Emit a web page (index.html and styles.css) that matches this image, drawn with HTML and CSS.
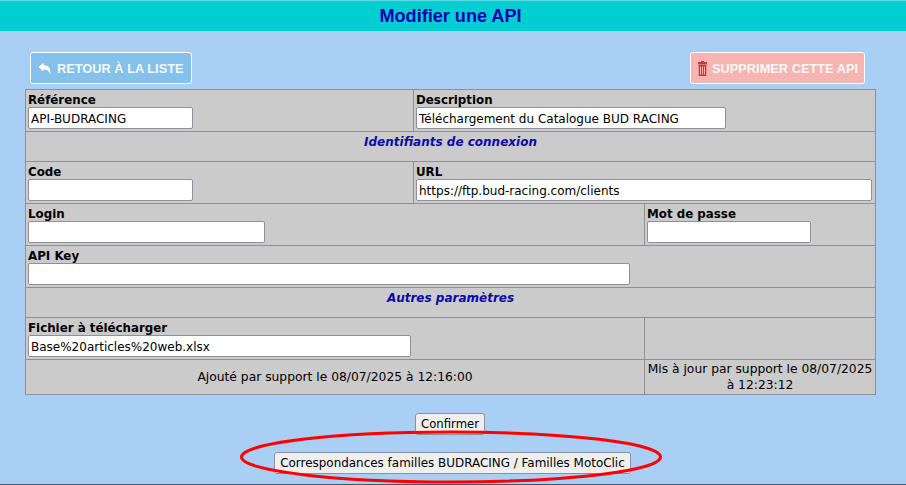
FILE: index.html
```html
<!DOCTYPE html>
<html lang="fr">
<head>
<meta charset="utf-8">
<title>Modifier une API</title>
<link rel="stylesheet" href="styles.css">
</head>
<body>
<header class="title-bar"><h1>Modifier une API</h1></header>
<main class="content">
  <div class="actions">
    <a class="btn btn-back"><svg class="ico" viewBox="0 0 13 13" width="13" height="13"><path fill="#fff" d="M0.5 5 L5.5 0.8 V3.2 C10 3.2 13 5.5 12.2 12.5 C11.2 9.2 9.5 7.6 5.5 7.6 V9.6 Z"/></svg>RETOUR À LA LISTE</a>
    <a class="btn btn-del"><svg class="ico" viewBox="0 0 9 15" width="9" height="15"><path fill="#d2323a" fill-rule="evenodd" d="M3 0h3v1h3v2.4H0V1h3zM.7 4h7.6v11H.7zM2 5.5v8h1v-8zM4 5.5v8h1v-8zM6 5.5v8h1v-8z"/></svg>SUPPRIMER CETTE API</a>
  </div>
  <table class="form">
    <colgroup><col class="c1"><col class="c2"><col class="c3"></colgroup>
    <tr class="r42">
      <td><label>Référence</label><input class="w165" value="API-BUDRACING"></td>
      <td colspan="2"><label>Description</label><input class="w310" value="Téléchargement du Catalogue BUD RACING"></td>
    </tr>
    <tr class="r30"><td colspan="3" class="section">Identifiants de connexion</td></tr>
    <tr class="r42">
      <td><label>Code</label><input class="w165"></td>
      <td colspan="2"><label>URL</label><input class="w456" value="https://ftp.bud-racing.com/clients"></td>
    </tr>
    <tr class="r42">
      <td colspan="2"><label>Login</label><input class="w237"></td>
      <td><label>Mot de passe</label><input class="w164"></td>
    </tr>
    <tr class="r42"><td colspan="3"><label>API Key</label><input class="w602"></td></tr>
    <tr class="r30"><td colspan="3" class="section">Autres paramètres</td></tr>
    <tr class="r42">
      <td colspan="2"><label>Fichier à télécharger</label><input class="w383" value="Base%20articles%20web.xlsx"></td>
      <td></td>
    </tr>
    <tr class="r35">
      <td colspan="2" class="center">Ajouté par support le 08/07/2025 à 12:16:00</td>
      <td class="center">Mis à jour par support le 08/07/2025 à 12:23:12</td>
    </tr>
  </table>
  <div class="submit-row"><button type="button" class="btn-confirm">Confirmer</button></div>
  <div class="map-row"><button type="button" class="btn-map">Correspondances familles BUDRACING / Familles MotoClic</button></div>
</main>
<svg class="ring" width="426" height="58" viewBox="0 0 426 58"><ellipse cx="213" cy="29" rx="209.5" ry="25" fill="none" stroke="#ff0000" stroke-width="3"/></svg>
</body>
</html>
```
FILE: styles.css
```css
html, body { margin: 0; padding: 0; }
body {
  height: 485px;
  overflow: hidden;
  background: #a9cff5;
  font-family: "DejaVu Sans", sans-serif;
  font-size: 12px;
  color: #000;
  position: relative;
  box-sizing: border-box;
  border-bottom: 1px solid #3f5570;
}
.title-bar {
  height: 30px;
  margin-top: 1px;
  padding-right: 5px;
  background: #00ced1;
  box-shadow: 0 -1px 0 #5fdcdf;
  display: flex;
  align-items: center;
  justify-content: center;
}
.title-bar h1 {
  margin: 0;
  font: bold 18.1px "Liberation Sans", Arial, sans-serif;
  color: #0000b0;
}
.content { padding: 21px 25px 0 25px; display: flex; flex-direction: column; }
.actions {
  display: flex;
  justify-content: space-between;
  padding: 0 16px 0 5px;
  height: 37px;
}
.btn {
  display: flex;
  align-items: center;
  height: 32px;
  box-sizing: border-box;
  border: 1px solid #fff;
  border-radius: 3px;
  padding: 0 7px;
  font: bold 12.8px "Liberation Sans", Arial, sans-serif;
  white-space: nowrap;
  color: rgba(255, 255, 255, 0.92);
}
.btn-back { background: #85c1ea; width: 162px; gap: 6px; }
.btn-del { background: #f6b4b2; width: 175px; gap: 5px; }
.ico { flex: none; }
.form {
  width: 850px;
  table-layout: fixed;
  border-collapse: collapse;
  background: #cbcbcb;
  border: 1px solid #8f8f96;
}
.c1 { width: 388px; }
.c2 { width: 231px; }
.c3 { width: 231px; }
.form td {
  border: 1px solid #8f8f96;
  padding: 0 2px;
  vertical-align: top;
}
.r42 { height: 42px; }
.r30 { height: 30px; }
.r35 { height: 35px; }
.form label { display: block; font-weight: bold; font-size: 11.85px; line-height: 15px; margin: 3px 0 -1px; }
.form input {
  display: block;
  box-sizing: border-box;
  height: 22px;
  margin-top: 0;
  padding: 1px 2px 0;
  border: 1px solid #8f8f9d;
  border-radius: 2px;
  background: #fff;
  font: 12px "DejaVu Sans", sans-serif;
  color: #000;
}
.w165 { width: 165px; }
.w310 { width: 310px; }
.w456 { width: 456px; }
.w237 { width: 237px; }
.w164 { width: 164px; }
.w602 { width: 602px; }
.w383 { width: 383px; }
.form td.section {
  text-align: center;
  font-weight: bold;
  font-style: italic;
  font-size: 12px;
  color: #0a0aa8;
  padding-top: 3px;
  line-height: 15px;
}
.form td.center { text-align: center; vertical-align: middle; font-size: 12.3px; line-height: 16px; }
button {
  height: 22px;
  box-sizing: border-box;
  padding: 0 5px;
  border: 1px solid #8f8f9d;
  border-radius: 3px;
  background: #efeff0;
  color: #000;
}
.btn-confirm { width: 70px; font: 11.7px "DejaVu Sans", sans-serif; }
.btn-map { width: 357px; font: 11.95px "DejaVu Sans", sans-serif; }
.submit-row { display: flex; justify-content: center; margin-top: 18px; padding-right: 6px; }
.map-row { display: flex; justify-content: center; margin-top: 17px; padding-right: 1px; }
.ring { position: absolute; left: 238px; top: 428px; }
```
